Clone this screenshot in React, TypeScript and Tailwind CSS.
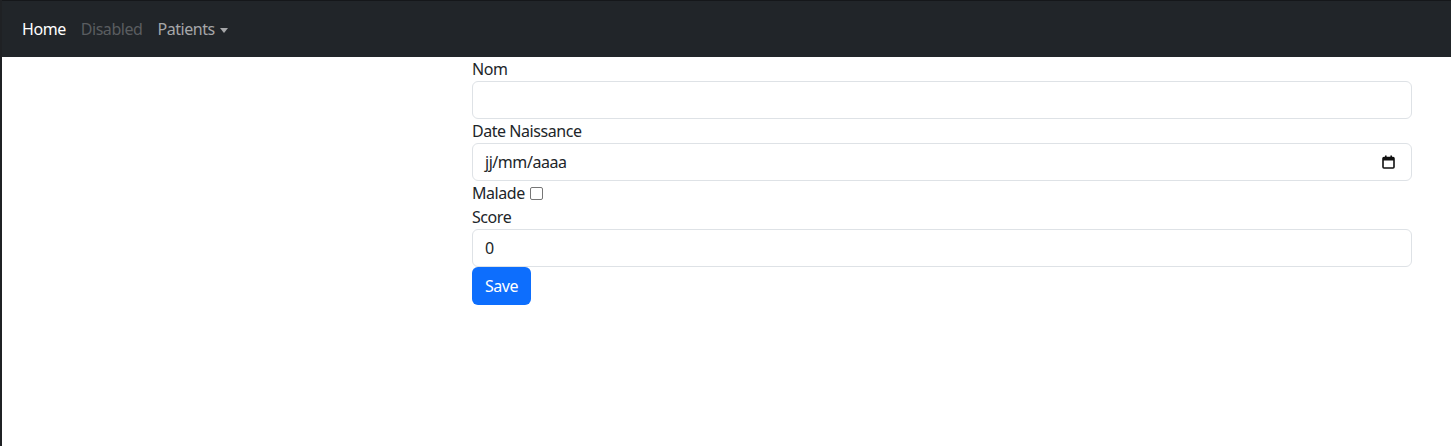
import React from 'react';

const font = { fontFamily: '"Noto Sans", "Open Sans", sans-serif', letterSpacing: '-0.45px' };

const CalendarIcon = () => (
  <svg width="13" height="14" viewBox="0 0 13 14" className="block">
    <rect x="1" y="2.5" width="11" height="10.5" rx="1" fill="none" stroke="#111" strokeWidth="1.6" />
    <rect x="1" y="2.5" width="11" height="3" fill="#111" />
    <rect x="3" y="0.5" width="1.6" height="3" fill="#111" />
    <rect x="8.4" y="0.5" width="1.6" height="3" fill="#111" />
  </svg>
);

const Navbar = () => (
  <nav className="h-[57px] bg-[#212529] border-t border-[#15171a] flex items-center pl-[18px]">
    <a className="text-white text-[16px] leading-6 px-[2px]">Home</a>
    <a className="text-[#5a5d60] text-[16px] leading-6 ml-[11px] px-[2px]">Disabled</a>
    <a className="text-[#a6a7a9] text-[16px] leading-6 ml-[11px] px-[2px] flex items-center">
      Patients
      <span className="ml-[5px] mt-[2px] w-0 h-0 border-l-[4px] border-r-[4px] border-t-[5px] border-l-transparent border-r-transparent border-t-[#a6a7a9]" />
    </a>
  </nav>
);

const Field = ({ label, children }: { label: string; children: React.ReactNode }) => (
  <div>
    <label className="block text-[16px] leading-6 text-[#212529]">{label}</label>
    {children}
  </div>
);

const inputCls =
  'block w-full h-[38px] px-3 border border-[#dee2e6] rounded-[6px] text-[16px] text-[#212529] bg-white outline-none';

export default function App() {
  return (
    <div className="min-h-[446px] bg-white border-l-2 border-[#1f2124]" style={font}>
      <Navbar />
      <div className="flex">
        <div className="w-[470px] shrink-0" />
        <form className="w-[940px]" onSubmit={(e) => e.preventDefault()}>
          <Field label="Nom">
            <input className={inputCls} style={font} />
          </Field>
          <Field label="Date Naissance">
            <div className={inputCls + ' flex items-center justify-between pr-[16px]'}>
              <span>jj/mm/aaaa</span>
              <CalendarIcon />
            </div>
          </Field>
          <div className="flex items-center text-[16px] leading-6 text-[#212529]">
            <span>Malade</span>
            <span className="ml-[5px] w-[13px] h-[13px] border border-[#767676] rounded-[2px] bg-white" />
          </div>
          <Field label="Score">
            <input className={inputCls} style={font} defaultValue="0" readOnly />
          </Field>
          <button
            type="submit"
            className="h-[38px] px-[13px] bg-[#0d6efd] text-white text-[16px] leading-6 rounded-[6px]"
          >
            Save
          </button>
        </form>
      </div>
    </div>
  );
}
